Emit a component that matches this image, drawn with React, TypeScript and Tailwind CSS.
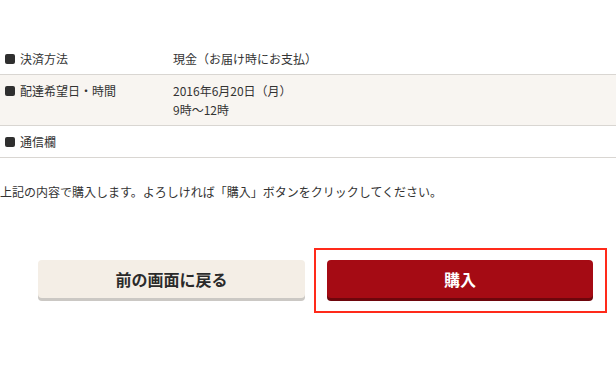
const FONT = '"Noto Sans CJK JP", "Noto Sans", sans-serif';

type Row = { label: string; value: string[]; shaded?: boolean };

const rows: Row[] = [
  { label: '決済方法', value: ['現金（お届け時にお支払）'] },
  { label: '配達希望日・時間', value: ['2016年6月20日（月）', '9時〜12時'], shaded: true },
  { label: '通信欄', value: [] },
];

function InfoRow({ row }: Readonly<{ row: Row }>) {
  return (
    <div
      className={`flex border-b border-[#d9d6d2] py-[6px] ${row.shaded ? 'bg-[#f8f5f1]' : 'bg-white'}`}
    >
      <div className="flex w-[173px] shrink-0 items-start pl-[5px]">
        <span className="flex h-[19px] items-center">
          <span className="block h-[10px] w-[10px] rounded-[2px] bg-[#2f2f2f]" />
        </span>
        <span className="ml-[5px] leading-[19px]">{row.label}</span>
      </div>
      <div className="flex flex-col leading-[19px]">
        {row.value.length > 0 ? row.value.map((v) => <span key={v}>{v}</span>) : <span>&nbsp;</span>}
      </div>
    </div>
  );
}

export default function App() {
  return (
    <div
      className="h-[374px] w-[616px] overflow-hidden bg-white text-[12px] text-[#333]"
      style={{ fontFamily: FONT }}
    >
      <div className="pt-[43px]">
        {rows.map((row) => (
          <InfoRow key={row.label} row={row} />
        ))}
      </div>

      <p className="mt-[26px] leading-[16px]">
        上記の内容で購入します。よろしければ「購入」ボタンをクリックしてください。
      </p>

      <div className="mt-[48px] flex items-start pl-[38px]">
        <button
          type="button"
          className="mt-[12px] h-[38px] w-[267px] rounded-[4px] bg-[#f4eee6] text-[16px] font-bold text-[#2a2a2a] shadow-[0_3px_0_#cbc8c4]"
        >
          前の画面に戻る
        </button>
        <div className="ml-[9px] border-2 border-[#ff2a1a] pb-[10px] pl-[11px] pr-[12px] pt-[10px]">
          <button
            type="button"
            className="h-[38px] w-[266px] rounded-[4px] bg-[#a50b14] text-[16px] font-bold text-white shadow-[0_3px_0_#6e060c]"
          >
            購入
          </button>
          <div className="h-[3px]" />
        </div>
      </div>
    </div>
  );
}
